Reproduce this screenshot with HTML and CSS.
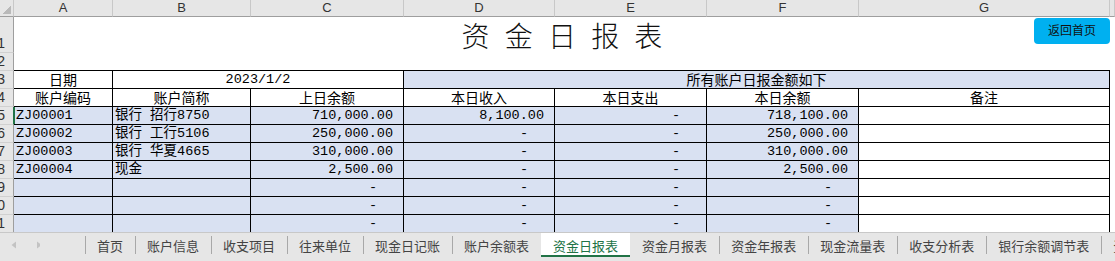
FILE: index.html
```html
<!DOCTYPE html>
<html lang="zh-CN">
<head>
<meta charset="UTF-8">
<title>资金日报表</title>
<link rel="stylesheet" href="styles.css">
</head>
<body>
<div class="book">
  <div class="sheet">
    <div class="grid">
      <!-- 列标题 -->
      <div class="corner"></div>
      <div class="ch">A</div>
      <div class="ch">B</div>
      <div class="ch">C</div>
      <div class="ch">D</div>
      <div class="ch">E</div>
      <div class="ch">F</div>
      <div class="ch">G</div>
      <div class="ch"></div>

      <!-- 1 -->
      <div class="rh rh-low">1</div>
      <div class="title">资 金 日 报 表</div>
      <div></div>

      <!-- 2 -->
      <div class="rh">2</div>
      <div class="under"></div><div class="under"></div><div class="under"></div><div class="under"></div>
      <div class="under"></div><div class="under"></div><div class="under"></div>
      <div></div>

      <!-- 3 -->
      <div class="rh">3</div>
      <div class="c hd">日期</div>
      <div class="c hd span2 mono">2023/1/2</div>
      <div class="c hd span4 blue">所有账户日报金额如下</div>
      <div></div>

      <!-- 4 -->
      <div class="rh">4</div>
      <div class="c hd">账户编码</div>
      <div class="c hd">账户简称</div>
      <div class="c hd">上日余额</div>
      <div class="c hd">本日收入</div>
      <div class="c hd">本日支出</div>
      <div class="c hd">本日余额</div>
      <div class="c hd">备注</div>
      <div></div>

      <!-- 5 -->
      <div class="rh sel-row">5</div>
      <div class="c blue txt sel">ZJ00001</div>
      <div class="c blue txt">银行 招行8750</div>
      <div class="c blue num">710,000.00</div>
      <div class="c blue num">8,100.00</div>
      <div class="c blue num dash">-</div>
      <div class="c blue num">718,100.00</div>
      <div class="c"></div>
      <div></div>

      <!-- 6 -->
      <div class="rh">6</div>
      <div class="c blue txt">ZJ00002</div>
      <div class="c blue txt">银行 工行5106</div>
      <div class="c blue num">250,000.00</div>
      <div class="c blue num dash">-</div>
      <div class="c blue num dash">-</div>
      <div class="c blue num">250,000.00</div>
      <div class="c"></div>
      <div></div>

      <!-- 7 -->
      <div class="rh">7</div>
      <div class="c blue txt">ZJ00003</div>
      <div class="c blue txt">银行 华夏4665</div>
      <div class="c blue num">310,000.00</div>
      <div class="c blue num dash">-</div>
      <div class="c blue num dash">-</div>
      <div class="c blue num">310,000.00</div>
      <div class="c"></div>
      <div></div>

      <!-- 8 -->
      <div class="rh">8</div>
      <div class="c blue txt">ZJ00004</div>
      <div class="c blue txt">现金</div>
      <div class="c blue num">2,500.00</div>
      <div class="c blue num dash">-</div>
      <div class="c blue num dash">-</div>
      <div class="c blue num">2,500.00</div>
      <div class="c"></div>
      <div></div>

      <!-- 9 -->
      <div class="rh">9</div>
      <div class="c blue"></div>
      <div class="c blue"></div>
      <div class="c blue num dash">-</div>
      <div class="c blue num dash">-</div>
      <div class="c blue num dash">-</div>
      <div class="c blue num dash">-</div>
      <div class="c"></div>
      <div></div>

      <!-- 10 -->
      <div class="rh">10</div>
      <div class="c blue"></div>
      <div class="c blue"></div>
      <div class="c blue num dash">-</div>
      <div class="c blue num dash">-</div>
      <div class="c blue num dash">-</div>
      <div class="c blue num dash">-</div>
      <div class="c"></div>
      <div></div>

      <!-- 11 -->
      <div class="rh">11</div>
      <div class="c blue"></div>
      <div class="c blue"></div>
      <div class="c blue num dash">-</div>
      <div class="c blue num dash">-</div>
      <div class="c blue num dash">-</div>
      <div class="c blue num dash">-</div>
      <div class="c"></div>
      <div></div>
    </div>

    <a class="btn" href="#">返回首页</a>
  </div>

  <div class="tabs">
    <div class="nav">
      <svg width="40" height="10" viewBox="0 0 40 10">
        <polygon points="16,1.5 16,8.5 11.5,5" fill="#c3c3c3"/>
        <polygon points="40,1.5 40,8.5 44.5,5" fill="#c3c3c3" transform="translate(-3 0)"/>
      </svg>
    </div>
    <div class="tab">首页</div>
    <div class="tab">账户信息</div>
    <div class="tab">收支项目</div>
    <div class="tab">往来单位</div>
    <div class="tab">现金日记账</div>
    <div class="tab">账户余额表</div>
    <div class="tab active">资金日报表</div>
    <div class="tab">资金月报表</div>
    <div class="tab">资金年报表</div>
    <div class="tab">现金流量表</div>
    <div class="tab">收支分析表</div>
    <div class="tab">银行余额调节表</div>
    <div class="tab">资金周报表</div>
  </div>
</div>
</body>
</html>
```

FILE: styles.css
```css
html, body {
  margin: 0;
  padding: 0;
  height: 100%;
  overflow: hidden;
  background: #fff;
}
body {
  font-family: "Noto Sans CJK SC", "Liberation Sans", sans-serif;
  color: #000;
}
.book {
  width: 1115px;
  height: 261px;
  display: flex;
  flex-direction: column;
}
.sheet {
  position: relative;
  height: 232px;
  flex: none;
  overflow: hidden;
}

/* 表格网格 */
.grid {
  display: grid;
  grid-template-columns: 14px 99px 138px 153px 151px 152px 152px 251px 1fr;
  grid-template-rows: 17px 36px repeat(10, 18px);
}
.grid > div {
  box-sizing: border-box;
  overflow: hidden;
  white-space: nowrap;
}
.corner {
  background: #e6e6e6 linear-gradient(135deg, transparent 55%, #b9b9b9 55%) no-repeat right 2px bottom 2px / 9px 9px;
  border-right: 1px solid #c8c8c8;
  border-bottom: 1px solid #9e9e9e;
}
.ch {
  background: #e6e6e6;
  border-right: 1px solid #c8c8c8;
  border-bottom: 1px solid #9e9e9e;
  font: 13px/16px "Liberation Sans", sans-serif;
  color: #333;
  text-align: center;
}
.rh {
  background: #e6e6e6;
  border-right: 1px solid #9e9e9e;
  border-bottom: 1px solid #d0d0d0;
  font: 14px/17px "Liberation Sans", sans-serif;
  color: #333;
  direction: rtl;
  padding-right: 8px;
}
.rh-low {
  padding-top: 18px;
}
.sel-row {
  border-right-color: #217346;
}
.grid > .title {
  grid-column: span 7;
  overflow: visible;
  text-align: center;
  font-size: 28px;
  font-weight: 300;
  line-height: 36px;
  word-spacing: 9px;
  color: #111;
}
.under {
  border-bottom: 1px solid #000;
}

/* 单元格 */
.c {
  border-right: 1px solid #000;
  border-bottom: 1px solid #000;
  font-size: 14px;
  line-height: 17px;
}
.span2 { grid-column: span 2; }
.span4 { grid-column: span 4; }
.blue { background: #d9e1f2; }
.hd { text-align: center; }
.mono,
.txt,
.num {
  font-family: "Liberation Mono", "Noto Sans CJK SC", monospace;
  font-size: 13.5px;
}
.txt {
  padding-left: 2px;
}
.num {
  text-align: right;
  padding-right: 10px;
}
.dash {
  padding-right: 26px;
}
.sel {
  box-shadow: inset 1px 0 0 #217346;
}

.btn {
  position: absolute;
  left: 1034px;
  top: 18px;
  width: 76px;
  height: 26px;
  border-radius: 4px;
  background: #00b0f0;
  color: #111;
  font-size: 12px;
  line-height: 24px;
  text-align: center;
  text-decoration: none;
}

/* 工作表标签 */
.tabs {
  flex: 1;
  display: flex;
  background: #e6e6e6;
  border-top: 1px solid #c8c8c8;
  padding-bottom: 4px;
  overflow: hidden;
  font-size: 13px;
  color: #444;
}
.nav {
  flex: none;
  width: 85px;
  display: flex;
  align-items: center;
}
.tab {
  flex: none;
  display: flex;
  align-items: center;
  padding: 0 12px;
  background: linear-gradient(#a8a8a8, #a8a8a8) no-repeat left 3px / 1px 18px;
}
.tab.active {
  background: #fff;
  color: #217346;
  box-shadow: inset 0 -2px 0 #217346;
}
.tab.active + .tab {
  background: none;
}
```
